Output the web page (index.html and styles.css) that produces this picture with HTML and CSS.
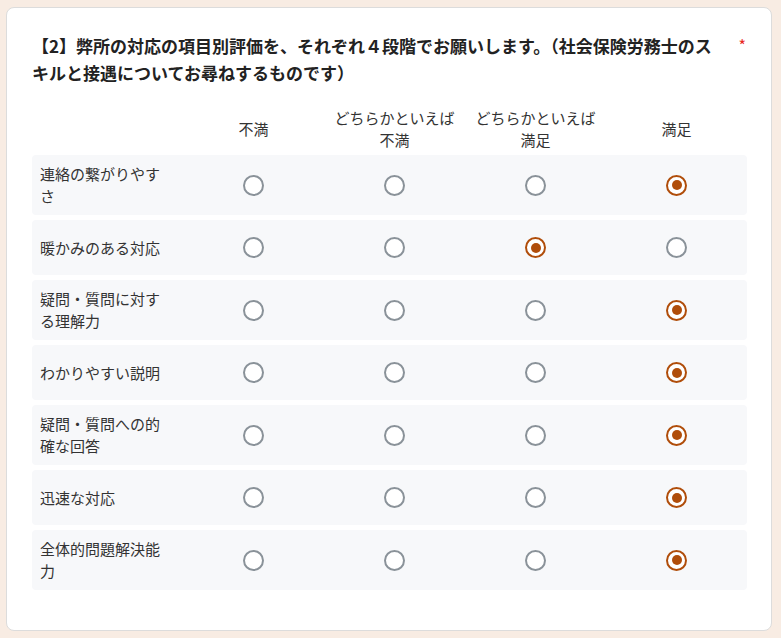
FILE: index.html
```html
<!DOCTYPE html>
<html lang="ja">
<head>
  <meta charset="UTF-8" />
  <meta name="viewport" content="width=device-width, initial-scale=1.0" />
  <title>アンケート</title>
  <link rel="stylesheet" href="styles.css">
</head>
<body>
  <div class="card">
    <div class="q-head">
      <h2 class="q-title">【2】弊所の対応の項目別評価を、それぞれ４段階でお願いします。（社会保険労務士のスキルと接遇についてお尋ねするものです）</h2>
      <span class="req">*</span>
    </div>

    <div class="matrix">
      <div class="m-head">
        <div></div>
        <div class="col">不満</div>
        <div class="col">どちらかといえば不満</div>
        <div class="col">どちらかといえば満足</div>
        <div class="col">満足</div>
      </div>
      <div id="rows"></div>
    </div>
  </div>

  <script>
    // 項目と選択された列 (0-3)
    const items = [
      ["連絡の繋がりやすさ", 3],
      ["暖かみのある対応", 2],
      ["疑問・質問に対する理解力", 3],
      ["わかりやすい説明", 3],
      ["疑問・質問への的確な回答", 3],
      ["迅速な対応", 3],
      ["全体的問題解決能力", 3]
    ];
    const rows = document.getElementById("rows");
    items.forEach(([label, sel]) => {
      let row = document.createElement("div");
      row.className = "m-row";
      let html = `<div class="label">${label}</div>`;
      for (let i = 0; i < 4; i++) {
        html += `<div class="cell"><span class="radio${i === sel ? " checked" : ""}"></span></div>`;
      }
      row.innerHTML = html;
      rows.appendChild(row);
    });
  </script>
</body>
</html>
```

FILE: styles.css
```css
* {
  margin: 0;
  padding: 0;
  box-sizing: border-box;
}
body {
  font-family: "Noto Sans CJK JP", "Noto Sans", sans-serif;
  background: #f8ece3;
  color: #333;
}

/* ===============================
   CARD
   =============================== */
.card {
  margin: 7px 9px 7px 6px;
  height: 624px;
  background: #fff;
  border: 1px solid #dcdcdc;
  border-radius: 8px;
  padding: 24px 24px 0 25px;
}
.q-head {
  display: flex;
  align-items: flex-start;
}
.q-title {
  flex: 1;
  font-size: 17px;
  line-height: 27px;
  font-weight: 700;
  color: #222;
  padding-right: 14px;
}
.req {
  color: #e8271d;
  font-size: 16px;
  line-height: 27px;
  margin-right: 1px;
}

/* ===============================
   MATRIX
   =============================== */
.matrix {
  margin-top: 20px;
  width: 715px;
}
.m-head,
.m-row {
  display: grid;
  grid-template-columns: 151px repeat(4, 141px);
  align-items: center;
}
.m-head {
  height: 46px;
  margin-bottom: 3px;
}
.col {
  text-align: center;
  font-size: 15px;
  line-height: 22px;
  padding: 0 6px;
}
.m-row {
  background: #f7f8fa;
  border-radius: 4px;
  min-height: 55px;
  margin-bottom: 5px;
}
.label {
  font-size: 15px;
  line-height: 22px;
  padding: 8px 18px 8px 8px;
}
.cell {
  display: flex;
  justify-content: center;
}
.radio {
  width: 21px;
  height: 21px;
  border: 2px solid #8a9299;
  border-radius: 50%;
  background: #fff;
  display: flex;
  align-items: center;
  justify-content: center;
}
.radio.checked {
  border: 2.5px solid #b04d0a;
}
.radio.checked::after {
  content: "";
  width: 10px;
  height: 10px;
  border-radius: 50%;
  background: #b04d0a;
}
```
